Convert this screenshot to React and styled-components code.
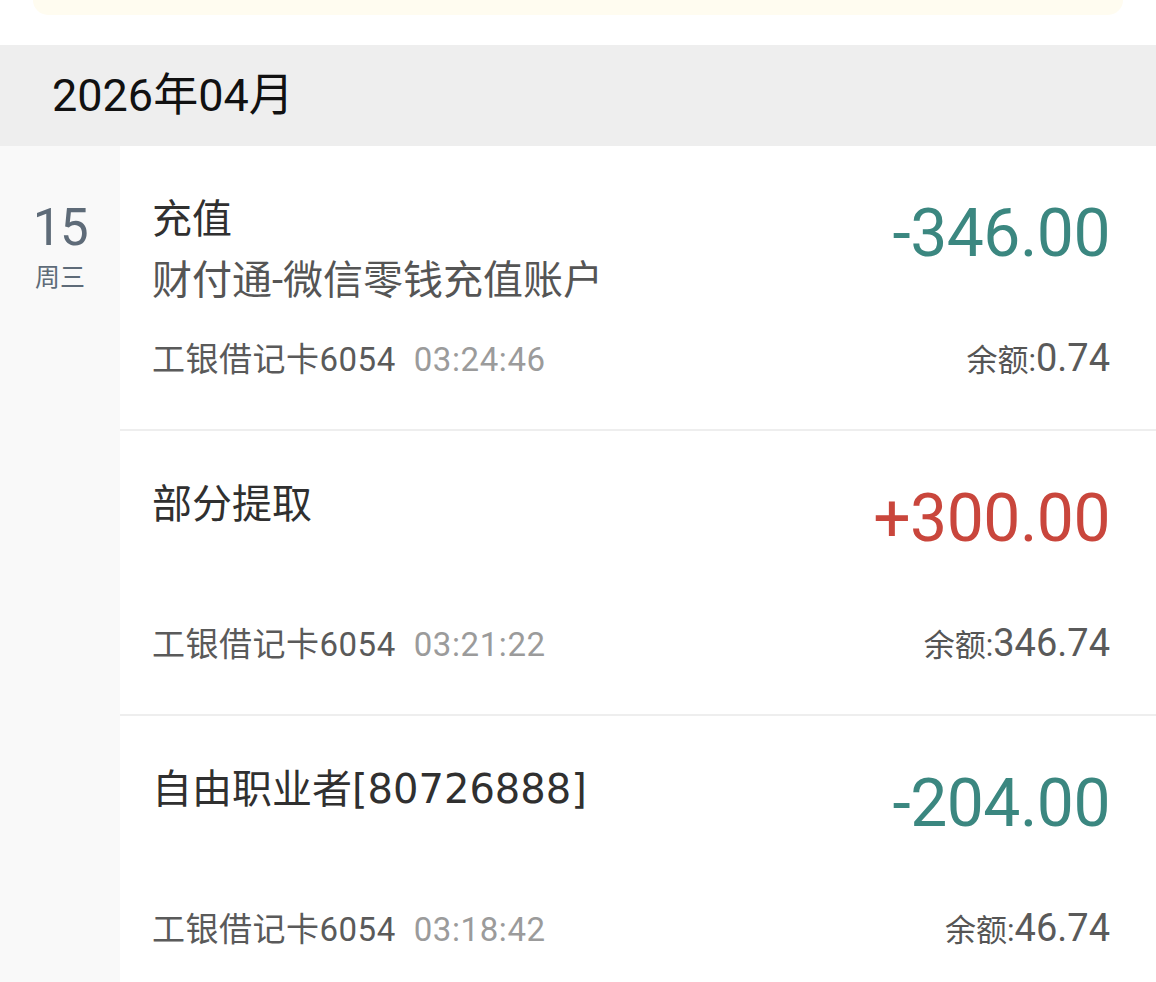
import React from "react";
import styled, { createGlobalStyle } from "styled-components";

const GlobalStyle = createGlobalStyle`
  html, body {
    margin: 0;
    padding: 0;
    background: #ffffff;
  }
  body {
    font-family: Roboto, "Noto Sans CJK SC", "Noto Sans", sans-serif;
    -webkit-font-smoothing: antialiased;
  }
`;

const records = [
  {
    title: "充值",
    desc: "财付通-微信零钱充值账户",
    card: "工银借记卡6054",
    time: "03:24:46",
    amount: "-346.00",
    balance: "0.74",
    income: false,
  },
  {
    title: "部分提取",
    card: "工银借记卡6054",
    time: "03:21:22",
    amount: "+300.00",
    balance: "346.74",
    income: true,
  },
  {
    title: "自由职业者[80726888]",
    card: "工银借记卡6054",
    time: "03:18:42",
    amount: "-204.00",
    balance: "46.74",
    income: false,
  },
];

function App() {
  return (
    <>
      <GlobalStyle />
      <Page>
        <NoticeCard />
        <MonthHeader>2026年04月</MonthHeader>
        <DayGroup>
          <DateCol>
            <DayNum>15</DayNum>
            <WeekDay>周三</WeekDay>
          </DateCol>
          <List>
            {records.map((r, i) => (
              <TxRow key={i}>
                <TopLine>
                  <Info>
                    <Title>{r.title}</Title>
                    {r.desc && <Desc>{r.desc}</Desc>}
                  </Info>
                  <Amount $income={r.income}>{r.amount}</Amount>
                </TopLine>
                <BottomLine>
                  <Meta>
                    {r.card}
                    <Time>{r.time}</Time>
                  </Meta>
                  <Balance>
                    余额:<BalanceNum>{r.balance}</BalanceNum>
                  </Balance>
                </BottomLine>
              </TxRow>
            ))}
          </List>
        </DayGroup>
      </Page>
    </>
  );
}

const Page = styled.div`
  width: 1156px;
  min-height: 982px;
  overflow: hidden;
  background: #ffffff;
`;

const NoticeCard = styled.div`
  height: 15px;
  margin: 0 33px 30px;
  background: #fffcf0;
  border-radius: 0 0 16px 16px;
`;

const MonthHeader = styled.div`
  box-sizing: border-box;
  height: 101px;
  display: flex;
  align-items: center;
  padding: 0 0 8px 52px;
  background: #eeeeee;
  color: #111111;
  font-size: 45px;
`;

const DayGroup = styled.div`
  display: flex;
  align-items: stretch;
`;

const DateCol = styled.div`
  width: 120px;
  flex-shrink: 0;
  background: #f9f9f9;
  display: flex;
  flex-direction: column;
  align-items: center;
  padding-top: 53px;
  color: #5e6b78;
`;

const DayNum = styled.div`
  font-size: 51px;
  line-height: 58px;
  letter-spacing: -1.5px;
`;

const WeekDay = styled.div`
  font-size: 25px;
  line-height: 32px;
  margin-top: 5px;
`;

const List = styled.div`
  flex: 1;
`;

const TxRow = styled.div`
  box-sizing: border-box;
  height: 285px;
  display: flex;
  flex-direction: column;
  padding: 49px 46px 48px 32px;
  border-bottom: 2px solid #eeeeee;
`;

const TopLine = styled.div`
  display: flex;
  justify-content: space-between;
  align-items: flex-start;
`;

const Info = styled.div`
  display: flex;
  flex-direction: column;
`;

const Title = styled.div`
  font-family: "DejaVu Sans", "Noto Sans CJK SC", sans-serif;
  font-size: 40px;
  line-height: 48px;
  color: #303030;
`;

const Desc = styled.div`
  font-size: 40px;
  line-height: 48px;
  margin-top: 14px;
  color: #555555;
`;

const Amount = styled.div`
  font-size: 66px;
  line-height: 66px;
  margin-top: 6px;
  letter-spacing: -0.5px;
  color: ${(p) => (p.$income ? "#c9463c" : "#3b8780")};
`;

const BottomLine = styled.div`
  margin-top: auto;
  display: flex;
  justify-content: space-between;
  align-items: baseline;
`;

const Meta = styled.div`
  font-size: 33px;
  line-height: 40px;
  letter-spacing: 0.5px;
  color: #5a5a5a;
`;

const Time = styled.span`
  margin-left: 18px;
  letter-spacing: 0.6px;
  color: #9b9b9b;
`;

const Balance = styled.div`
  font-size: 31px;
  line-height: 40px;
  color: #555555;
`;

const BalanceNum = styled.span`
  font-size: 38px;
  color: #5a5a5a;
`;

export default App;
